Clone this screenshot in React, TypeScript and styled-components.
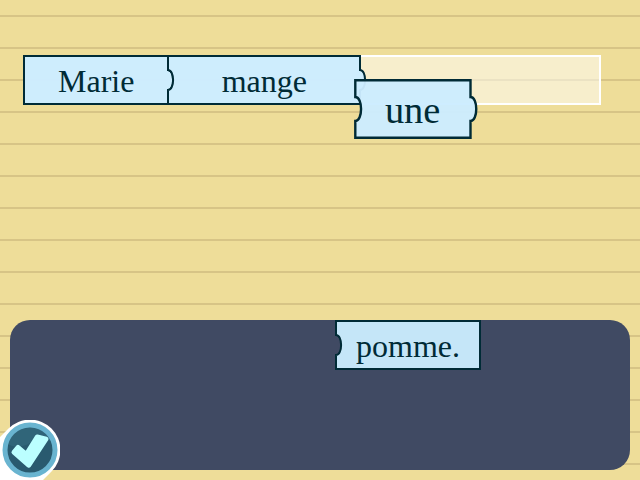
import React from "react";
import styled, { createGlobalStyle } from "styled-components";

const Global = createGlobalStyle`
  body { margin: 0; overflow: hidden; }
`;

const Paper = styled.main`
  position: relative;
  box-sizing: border-box;
  width: 640px;
  height: 480px;
  overflow: hidden;
  padding: 55px 10px 10px;
  display: flex;
  flex-direction: column;
  justify-content: space-between;
  background: repeating-linear-gradient(
    to bottom,
    #eedd99 0 15px,
    #d7c486 15px 17px,
    #eedd99 17px 32px
  );
  font-family: "Liberation Serif", serif;
  color: #002b36;
`;

const Sentence = styled.section`
  box-sizing: border-box;
  width: 578px;
  height: 50px;
  margin-left: 13px;
  padding-left: 1px;
  display: flex;
  align-items: center;
  border: 2px solid #fff;
  border-left: 0;
  background: rgba(255, 255, 255, 0.5);
  background-clip: padding-box;
`;

const Tray = styled.section`
  box-sizing: border-box;
  height: 150px;
  padding: 1px 0 0 326px;
  border-radius: 20px;
  background: #404a63;
`;

const CardBox = styled.div<{ $w: number; $scale: number }>`
  position: relative;
  flex: none;
  width: ${(p) => p.$w * p.$scale}px;
  height: ${(p) => 48 * p.$scale}px;
  display: flex;
  align-items: center;
  justify-content: center;
  font-size: ${(p) => 32 * p.$scale}px;
  line-height: 1;
`;

const Shape = styled.svg`
  position: absolute;
  left: 0;
  top: 0;
  overflow: visible;
`;

const Word = styled.span<{ $dx: number; $dy: number }>`
  position: relative;
  padding: ${(p) => p.$dy}px 0 0 ${(p) => p.$dx}px;
`;

const Dragged = styled.div`
  position: absolute;
  left: 355px;
  top: 80px;
`;

const Confirm = styled.button`
  position: absolute;
  left: 0;
  bottom: 0;
  width: 60px;
  height: 60px;
  padding: 0;
  border: 0;
  background: none;
  display: flex;
`;

type CardProps = {
  word: string;
  width: number;
  notch?: boolean;
  tab?: boolean;
  scale?: number;
  nudge?: number;
  fill?: string;
};

function Card({ word, width, notch, tab, scale = 1, nudge = 0, fill = "rgba(204,236,255,0.96)" }: CardProps) {
  const reach = scale > 1 ? 6.4 : 6.8;
  const bulge = width + reach;
  const right = tab
    ? `V14 C${bulge} 14 ${bulge} 34 ${width} 34 V48`
    : "V48";
  const left = notch ? `V34 C${reach} 34 ${reach} 14 0 14 V0` : "V0";
  const place = scale > 1 ? `translate(0.3 0.2) scale(${scale})` : undefined;
  return (
    <CardBox $w={width} $scale={scale}>
      <Shape width={Math.ceil(width * scale)} height={Math.ceil(48 * scale)}>
        <path
          transform={place}
          d={`M0 0 H${width} ${right} H0 ${left} Z`}
          fill={fill}
          stroke="#002b36"
          strokeWidth="2"
        />
      </Shape>
      <Word $dx={nudge} $dy={scale > 1 ? 3 : 1}>{word}</Word>
    </CardBox>
  );
}

export default function App() {
  return (
    <>
      <Global />
      <Paper>
        <Sentence>
          <Card word="Marie" width={144} tab nudge={0.4} />
          <Card word="mange" width={192} notch tab nudge={0.6} />
        </Sentence>
        <Tray>
          <Card word="pomme." width={144} notch fill="#c5e6f8" />
        </Tray>
        <Dragged>
          <Card word="une" width={96} notch tab scale={1.2} />
        </Dragged>
        <Confirm aria-label="OK">
          <svg width="60" height="60" viewBox="0 0 60 60">
            <path d="M0 17 L8.5 8.5 A30.4 30.4 0 0 1 51.5 51.5 L43 60 H0 Z" fill="#fff" />
            <circle cx="30" cy="30" r="25" fill="#295a6f" />
            <path d="M7 24 Q18 30 30 23 Q42 17 53 22 A25 25 0 0 0 7 24 Z" fill="#306579" />
            <circle cx="30" cy="30" r="25" fill="none" stroke="#69b4d0" strokeWidth="5" />
            <path
              d="M13.8 32.3 L18 27.2 L26.3 34.2 L37.2 16.8 L46.2 19 L28.8 45.4 Z"
              fill="#bff"
              stroke="#bff"
              strokeWidth="4.6"
              strokeLinejoin="round"
            />
          </svg>
        </Confirm>
      </Paper>
    </>
  );
}
